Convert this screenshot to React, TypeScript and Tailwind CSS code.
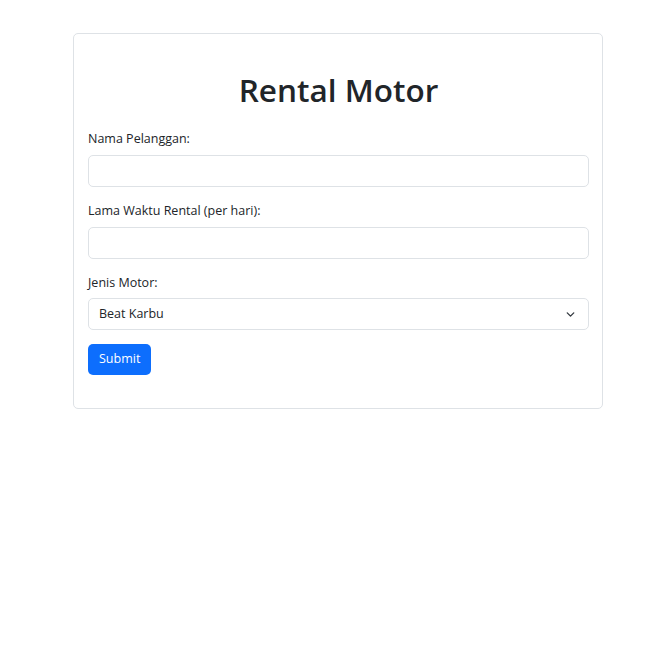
import React from 'react';
import { ChevronDown } from 'lucide-react';

export default function App() {
  return (
    <div className="min-h-screen bg-white pt-[33px] pl-[73px] text-[#212529]" style={{ fontFamily: '"Open Sans", "Noto Sans", sans-serif' }}>
      <div className="w-[530px] border border-[#dee2e6] rounded-[5px] pl-[14px] pr-[13px] pt-[37px] pb-[33px]">
        <h1 className="text-center text-[31.5px] leading-[38px] font-semibold mb-[20px]">Rental Motor</h1>
        <form className="flex flex-col">
          <label className="text-[12.5px] leading-[20px] mb-[6px]">Nama Pelanggan:</label>
          <input type="text" className="h-[32px] border border-[#dee2e6] rounded-[5px] px-[10px] text-[13px] mb-[14px] outline-none" />

          <label className="text-[12.5px] leading-[20px] mb-[6px]">Lama Waktu Rental (per hari):</label>
          <input type="text" className="h-[32px] border border-[#dee2e6] rounded-[5px] px-[10px] text-[13px] mb-[14px] outline-none" />

          <label className="text-[12.5px] leading-[20px] mb-[5px]">Jenis Motor:</label>
          <div className="relative h-[32px] border border-[#dee2e6] rounded-[5px] flex items-center pl-[10px] text-[12.5px] mb-[14px]">
            <span>Beat Karbu</span>
            <ChevronDown className="absolute right-[11px] w-[13px] h-[13px] text-[#343a40]" strokeWidth={2.5} />
          </div>

          <div>
            <button type="button" className="h-[31px] px-[11px] bg-[#0d6efd] text-white text-[12.5px] rounded-[5px]">Submit</button>
          </div>
        </form>
      </div>
    </div>
  );
}
